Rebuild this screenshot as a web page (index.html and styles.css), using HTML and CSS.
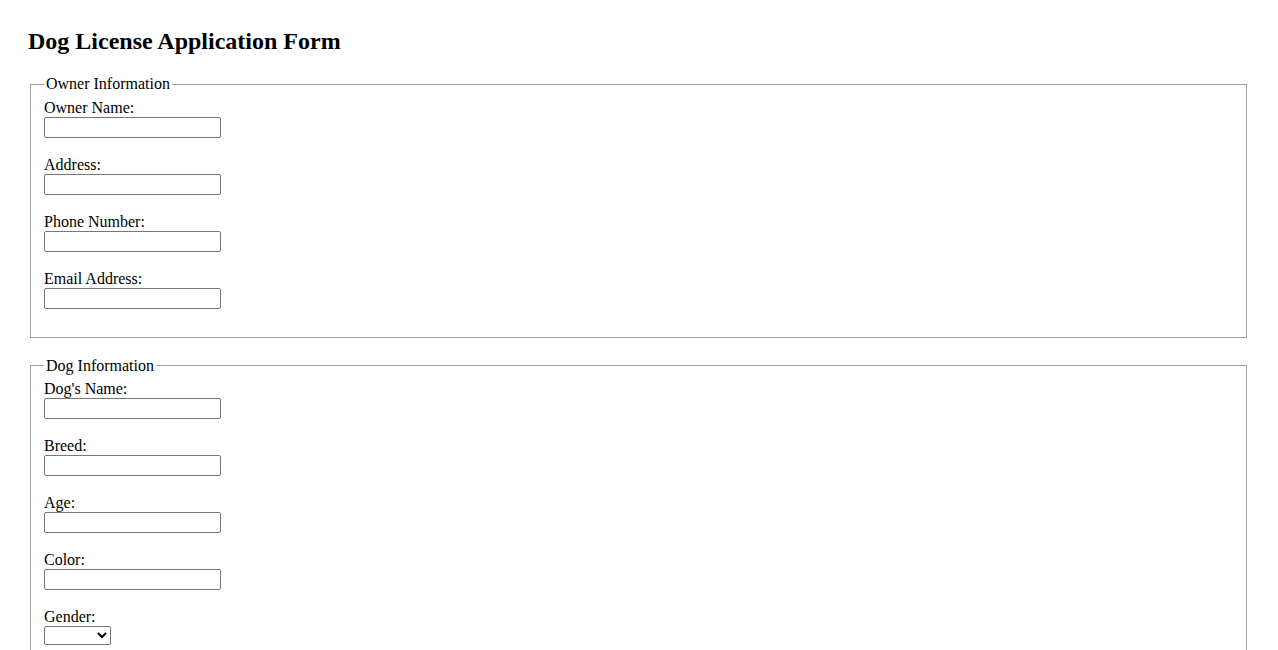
FILE: index.html
```html
<!DOCTYPE html>
<html>
<head>
<meta charset="utf-8">
<title>Dog License Application Form</title>
<link rel="stylesheet" href="styles.css">
</head>
<body>
<h2 class="title">Dog License Application Form</h2>
<form>
  <fieldset class="section">
    <legend>Owner Information</legend>
    <div class="field"><label>Owner Name:</label><input type="text" class="text-input"></div>
    <div class="field"><label>Address:</label><input type="text" class="text-input"></div>
    <div class="field"><label>Phone Number:</label><input type="text" class="text-input"></div>
    <div class="field"><label>Email Address:</label><input type="text" class="text-input"></div>
  </fieldset>
  <fieldset class="section">
    <legend>Dog Information</legend>
    <div class="field"><label>Dog's Name:</label><input type="text" class="text-input"></div>
    <div class="field"><label>Breed:</label><input type="text" class="text-input"></div>
    <div class="field"><label>Age:</label><input type="text" class="text-input"></div>
    <div class="field"><label>Color:</label><input type="text" class="text-input"></div>
    <div class="field"><label>Gender:</label><select class="select-input"><option></option><option>Male</option><option>Female</option></select></div>
  </fieldset>
</form>
</body>
</html>
```
FILE: styles.css
```css
html, body {
  background: #fff;
}
body {
  margin: 0;
  padding: 27px 28px 28px 28px;
  font-family: "Liberation Serif", "Times New Roman", serif;
  font-size: 16px;
  color: #000;
}
.title {
  margin: 0 0 20px 0;
  font-size: 24px;
  font-weight: bold;
  line-height: 28px;
}
.section {
  margin: 0 3px 19px 2px;
  padding: 5.6px 12px 10px 13px;
  border: 1px solid #a0a0a0;
}
.section legend {
  padding: 0 2px;
  line-height: 18px;
}
.field {
  display: flex;
  flex-direction: column;
  align-items: flex-start;
  margin-bottom: 18px;
}
.field label {
  line-height: 18px;
}
.text-input {
  box-sizing: border-box;
  width: 177px;
  height: 21px;
  margin: 0;
  padding: 1px 2px;
  border: 1px solid #767676;
  border-radius: 2px;
  font-family: "Liberation Sans", Arial, sans-serif;
  font-size: 13.33px;
  background: #fff;
}
.select-input {
  box-sizing: border-box;
  width: 67px;
  height: 19px;
  margin: 0;
  border: 1px solid #767676;
  border-radius: 2px;
  font-family: "Liberation Sans", Arial, sans-serif;
  font-size: 13.33px;
  background: #fff;
  color: #000;
}
```
